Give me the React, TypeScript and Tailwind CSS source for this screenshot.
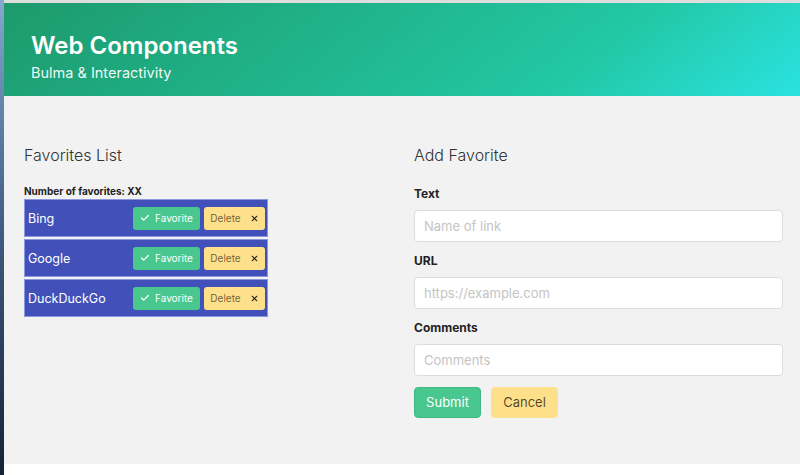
import React from 'react';
import { Check, X } from 'lucide-react';

const favorites = ['Bing', 'Google', 'DuckDuckGo'];

const FavoriteRow: React.FC<{ name: string }> = ({ name }) => (
  <div className="flex h-[38px] items-center justify-between border border-[#8c96dc] bg-[#4251b9] pl-[3px] pr-[2px] mb-[2px]">
    <span className="pt-[2px] text-[12.5px] text-white">{name}</span>
    <div className="flex gap-1">
      <button className="flex h-[23px] w-[67px] items-center justify-center gap-[5px] rounded-[3px] bg-[#48c78e] text-[10px] text-white">
        <Check className="h-[10px] w-[10px]" strokeWidth={3} />
        Favorite
      </button>
      <button className="flex h-[23px] w-[61px] items-center justify-center gap-[9px] rounded-[3px] bg-[#ffe08a] text-[10px] text-black/60">
        Delete
        <X className="h-[9px] w-[9px] text-black/80" strokeWidth={3} />
      </button>
    </div>
  </div>
);

const Field: React.FC<{ label: string; placeholder: string }> = ({ label, placeholder }) => (
  <div className="mb-[11px]">
    <label className="mb-2 block text-[12px] leading-4 font-bold text-[#222]">{label}</label>
    <input
      placeholder={placeholder}
      className="h-8 w-full rounded-[4px] border border-[#dcdcdc] bg-white px-[9px] text-[13px] placeholder:text-[#c4c4c4] outline-none"
    />
  </div>
);

export default function App() {
  return (
    <div className="flex h-[475px] w-[800px] overflow-hidden bg-white font-['Inter',sans-serif]">
      {/* desktop edge */}
      <div className="h-full w-[4px] shrink-0 bg-gradient-to-b from-[#86a8cc] via-[#3f5a80] to-[#152338]" />

      <div className="flex flex-1 flex-col">
        <div className="h-[3px] bg-[#dedede]" />

        {/* Hero */}
        <header className="h-[93px] bg-[linear-gradient(141deg,#1d9a6c_0%,#22c7a3_71%,#2ae2e0_100%)] px-[27px] pt-[28px]">
          <h1 className="text-[24px] leading-[30px] font-semibold text-white">Web Components</h1>
          <p className="mt-[2px] text-[14.5px] leading-5 text-white/95">Bulma &amp; Interactivity</p>
        </header>

        {/* Main */}
        <main className="grid h-[368px] grid-cols-2 gap-[21px] bg-[#f2f2f2] pl-5 pr-[17px] pt-[47px]">
          <section>
            <h2 className="mb-[18px] text-[16px] leading-6 font-light text-[#333]">Favorites List</h2>
            <p className="mb-[2px] text-[10px] leading-3 font-bold text-[#222]">Number of favorites: XX</p>
            <div className="w-[244px]">
              {favorites.map((f) => (
                <FavoriteRow key={f} name={f} />
              ))}
            </div>
          </section>

          <section>
            <h2 className="mb-[19px] text-[16px] leading-6 font-light text-[#333]">Add Favorite</h2>
            <Field label="Text" placeholder="Name of link" />
            <Field label="URL" placeholder="https://example.com" />
            <Field label="Comments" placeholder="Comments" />
            <div className="flex gap-[10px]">
              <button className="h-[31px] w-[67px] rounded-[4px] border border-[#3fb983] bg-[#48c78e] text-[13px] text-white">
                Submit
              </button>
              <button className="h-[31px] w-[67px] rounded-[4px] bg-[#ffe08a] text-[13px] text-black/70">
                Cancel
              </button>
            </div>
          </section>
        </main>
      </div>
    </div>
  );
}
